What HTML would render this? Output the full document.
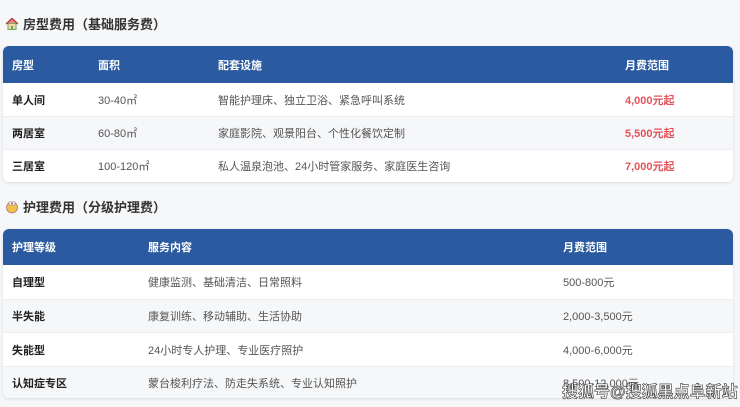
<!DOCTYPE html>
<html><head><meta charset="utf-8"><style>
body{margin:0;width:740px;height:407px;background:#f6f7f9;font-family:"Liberation Sans","Noto Sans CJK SC",sans-serif;position:relative;overflow:hidden;color:#333}
.t{position:absolute;left:5px;font-size:13px;font-weight:bold;color:#333;display:flex;align-items:center;gap:4px}
.card{position:absolute;left:3px;width:730px;background:#fff;border-radius:6px;box-shadow:0 1px 3px rgba(0,0,0,.12);overflow:hidden}
.row{position:relative;height:33px;box-sizing:border-box;font-size:11px;border-top:1px solid #eceef1}
.row span{position:absolute;top:50%;transform:translateY(-50%)}
.h{background:#2b5aa0;color:#fff;font-weight:bold;height:37px;border:0}
.alt{background:#f6f7f9}
.b{font-weight:bold;color:#222}
.r{color:#e2545a;font-weight:bold}
.c{color:#555}
.wm{position:absolute;left:562px;top:378px;font-size:16px;color:#fff;font-weight:bold;-webkit-text-stroke:0.6px #333;letter-spacing:0}
</style></head><body>
<div class="t" style="top:14px"><svg width="14" height="14" viewBox="0 0 14 14"><path d="M1 7L7 1.5 13 7" fill="#e88" stroke="#a33" stroke-width="1.2"/><rect x="3" y="6.5" width="8" height="6" fill="#f5d9a0" stroke="#7a5"/><rect x="6" y="9" width="2" height="3.5" fill="#4a8"/></svg>房型费用（基础服务费）</div>
<div class="card" style="top:46px">
<div class="row h"><span style="left:9px">房型</span><span style="left:95px">面积</span><span style="left:215px">配套设施</span><span style="left:622px">月费范围</span></div>
<div class="row" style="border:0"><span class="b" style="left:9px">单人间</span><span class="c" style="left:95px">30-40㎡</span><span class="c" style="left:215px">智能护理床、独立卫浴、紧急呼叫系统</span><span class="r" style="left:622px">4,000元起</span></div>
<div class="row alt"><span class="b" style="left:9px">两居室</span><span class="c" style="left:95px">60-80㎡</span><span class="c" style="left:215px">家庭影院、观景阳台、个性化餐饮定制</span><span class="r" style="left:622px">5,500元起</span></div>
<div class="row"><span class="b" style="left:9px">三居室</span><span class="c" style="left:95px">100-120㎡</span><span class="c" style="left:215px">私人温泉泡池、24小时管家服务、家庭医生咨询</span><span class="r" style="left:622px">7,000元起</span></div>
</div>
<div class="t" style="top:197px"><svg width="14" height="14" viewBox="0 0 14 14"><circle cx="7" cy="7.5" r="5.5" fill="#f3c14b" stroke="#a77" stroke-width=".8"/><rect x="4" y="2" width="6" height="3" fill="#fff" stroke="#888" stroke-width=".6"/><path d="M6 3.5h2M7 2.5v2" stroke="#d33" stroke-width=".8"/></svg>护理费用（分级护理费）</div>
<div class="card" style="top:229px;height:169px">
<div class="row h" style="height:36px"><span style="left:9px">护理等级</span><span style="left:145px">服务内容</span><span style="left:560px">月费范围</span></div>
<div class="row" style="border:0;height:34px"><span class="b" style="left:9px">自理型</span><span class="c" style="left:145px">健康监测、基础清洁、日常照料</span><span class="c" style="left:560px">500-800元</span></div>
<div class="row alt"><span class="b" style="left:9px">半失能</span><span class="c" style="left:145px">康复训练、移动辅助、生活协助</span><span class="c" style="left:560px">2,000-3,500元</span></div>
<div class="row" style="height:34px"><span class="b" style="left:9px">失能型</span><span class="c" style="left:145px">24小时专人护理、专业医疗照护</span><span class="c" style="left:560px">4,000-6,000元</span></div>
<div class="row alt"><span class="b" style="left:9px">认知症专区</span><span class="c" style="left:145px">蒙台梭利疗法、防走失系统、专业认知照护</span><span class="c" style="left:560px">8,500-12,000元</span></div>
</div>
<div class="wm">搜狐号@搜狐黑点阜新站</div>
</body></html>
